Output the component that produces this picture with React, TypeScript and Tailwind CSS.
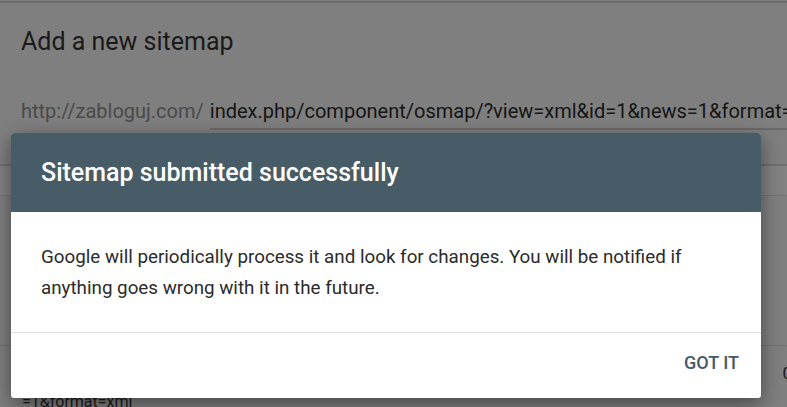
export default function App() {
  return (
    <div className="relative h-[407px] w-[787px] overflow-hidden bg-[#7f7f7f] font-['Roboto',sans-serif]">
      {/* page behind the scrim */}
      <div className="mt-px h-[2px] bg-[#6d6d6d]" />
      <div className="px-[21px] pt-[23px]">
        <h2 className="text-[25px] leading-[32px] text-[#1a1a1a]">Add a new sitemap</h2>
        <div className="mt-[40px] flex items-end whitespace-nowrap">
          <span className="pb-[6px] text-[20px] leading-[26px] text-[#4a4a4a]">http://zabloguj.com/</span>
          <div className="ml-[6px] flex-1 border-b-2 border-[#6a6a6a] pb-[4px] text-[20px] leading-[26px] text-[#151515]">
            index.php/component/osmap/?view=xml&amp;id=1&amp;news=1&amp;format=xml
          </div>
        </div>
      </div>
      <div className="mt-[34px] h-[31px] border-t-2 border-[#707070] bg-[#828282]" />
      <div className="h-[150px] border-t border-[#747474]" />
      <div className="border-t border-[#717171] px-[22px] pt-[17px]">
        <div className="flex justify-end text-[17px] leading-[20px] text-[#1a1a1a]">
          <span className="-mr-[27px]">0</span>
        </div>
        <div className="mt-[9px] text-[16px] leading-[20px] text-[#1a1a1a]">=1&amp;format=xml</div>
      </div>

      {/* dialog */}
      <div className="absolute left-[11px] top-[133px] w-[750px] overflow-hidden rounded-[3px] bg-white shadow-[0_6px_20px_rgba(0,0,0,0.45)]">
        <div className="flex h-[79px] items-center bg-[#485c67] px-[30px]">
          <h1 className="text-[25px] font-medium text-white">Sitemap submitted successfully</h1>
        </div>
        <div className="border-b border-[#e0e0e0] px-[30px] pb-[28px] pt-[30px] text-[18.8px] leading-[31px] text-[#2b2b2b]">
          Google will periodically process it and look for changes. You will be notified if anything goes wrong with it in the future.
        </div>
        <div className="flex h-[65px] items-start justify-end pr-[22px] pt-[19px]">
          <button className="text-[18px] font-medium leading-[22px] text-[#455a64]">GOT IT</button>
        </div>
      </div>
    </div>
  );
}
